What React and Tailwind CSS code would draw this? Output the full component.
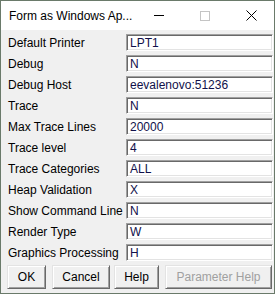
import React from "react";

const rows = [
  ["Default Printer", "LPT1"],
  ["Debug", "N"],
  ["Debug Host", "eevalenovo:51236"],
  ["Trace", "N"],
  ["Max Trace Lines", "20000"],
  ["Trace level", "4"],
  ["Trace Categories", "ALL"],
  ["Heap Validation", "X"],
  ["Show Command Line", "N"],
  ["Render Type", "W"],
  ["Graphics Processing", "H"],
];

function Btn({ children, w, disabled }) {
  return (
    <div
      className={`${w} h-[24px] flex items-center justify-center bg-[#f0f0f0] border border-t-[#e3e3e3] border-l-[#e3e3e3] border-r-[#696969] border-b-[#696969] shadow-[inset_1px_1px_0_#ffffff,inset_-1px_-1px_0_#a0a0a0] ${
        disabled ? "text-[#a0a0a0]" : "text-black"
      }`}
    >
      {children}
    </div>
  );
}

export default function App() {
  return (
    <div
      className="w-[275px] h-[294px] border border-[#6a7a6a] bg-[#f0f0f0] flex flex-col text-[12px] leading-none text-black"
      style={{ fontFamily: '"Liberation Sans", Arial, sans-serif' }}
    >
      <div className="h-[29px] bg-white flex items-center shrink-0">
        <div className="flex-1 pl-[8px] text-[12px] pt-[1px] whitespace-nowrap">Form as Windows Ap...</div>
        <div className="w-[46px] h-full flex items-center justify-center">
          <div className="w-[10px] h-px bg-black" />
        </div>
        <div className="w-[46px] h-full flex items-center justify-center">
          <div className="w-[10px] h-[10px] border border-[#c4c4c4]" />
        </div>
        <div className="w-[46px] h-full flex items-center justify-center">
          <svg width="11" height="11" viewBox="0 0 11 11">
            <path d="M0.5 0.5 L10.5 10.5 M10.5 0.5 L0.5 10.5" stroke="#000" strokeWidth="1" />
          </svg>
        </div>
      </div>
      <div className="flex flex-col gap-[4px] pt-[4px] pl-[7px] pr-[1px]">
        {rows.map(([label, value]) => (
          <div key={label} className="flex items-center h-[17px]">
            <div className="w-[118px] whitespace-nowrap">{label}</div>
            <div className="flex-1 h-[17px] flex items-center pl-[3px] bg-white border border-t-[#a0a0a0] border-l-[#a0a0a0] border-r-white border-b-white shadow-[inset_1px_1px_0_#696969,inset_-1px_-1px_0_#e3e3e3] text-[#10104a]">
              {value}
            </div>
          </div>
        ))}
      </div>
      <div className="flex pl-[6px] pt-[4px]">
        <Btn w="w-[39px]">OK</Btn>
        <div className="w-[6px]" />
        <Btn w="w-[58px]">Cancel</Btn>
        <div className="w-[4px]" />
        <Btn w="w-[45px]">Help</Btn>
        <div className="w-[6px]" />
        <Btn w="w-[107px]" disabled>
          Parameter Help
        </Btn>
      </div>
    </div>
  );
}
